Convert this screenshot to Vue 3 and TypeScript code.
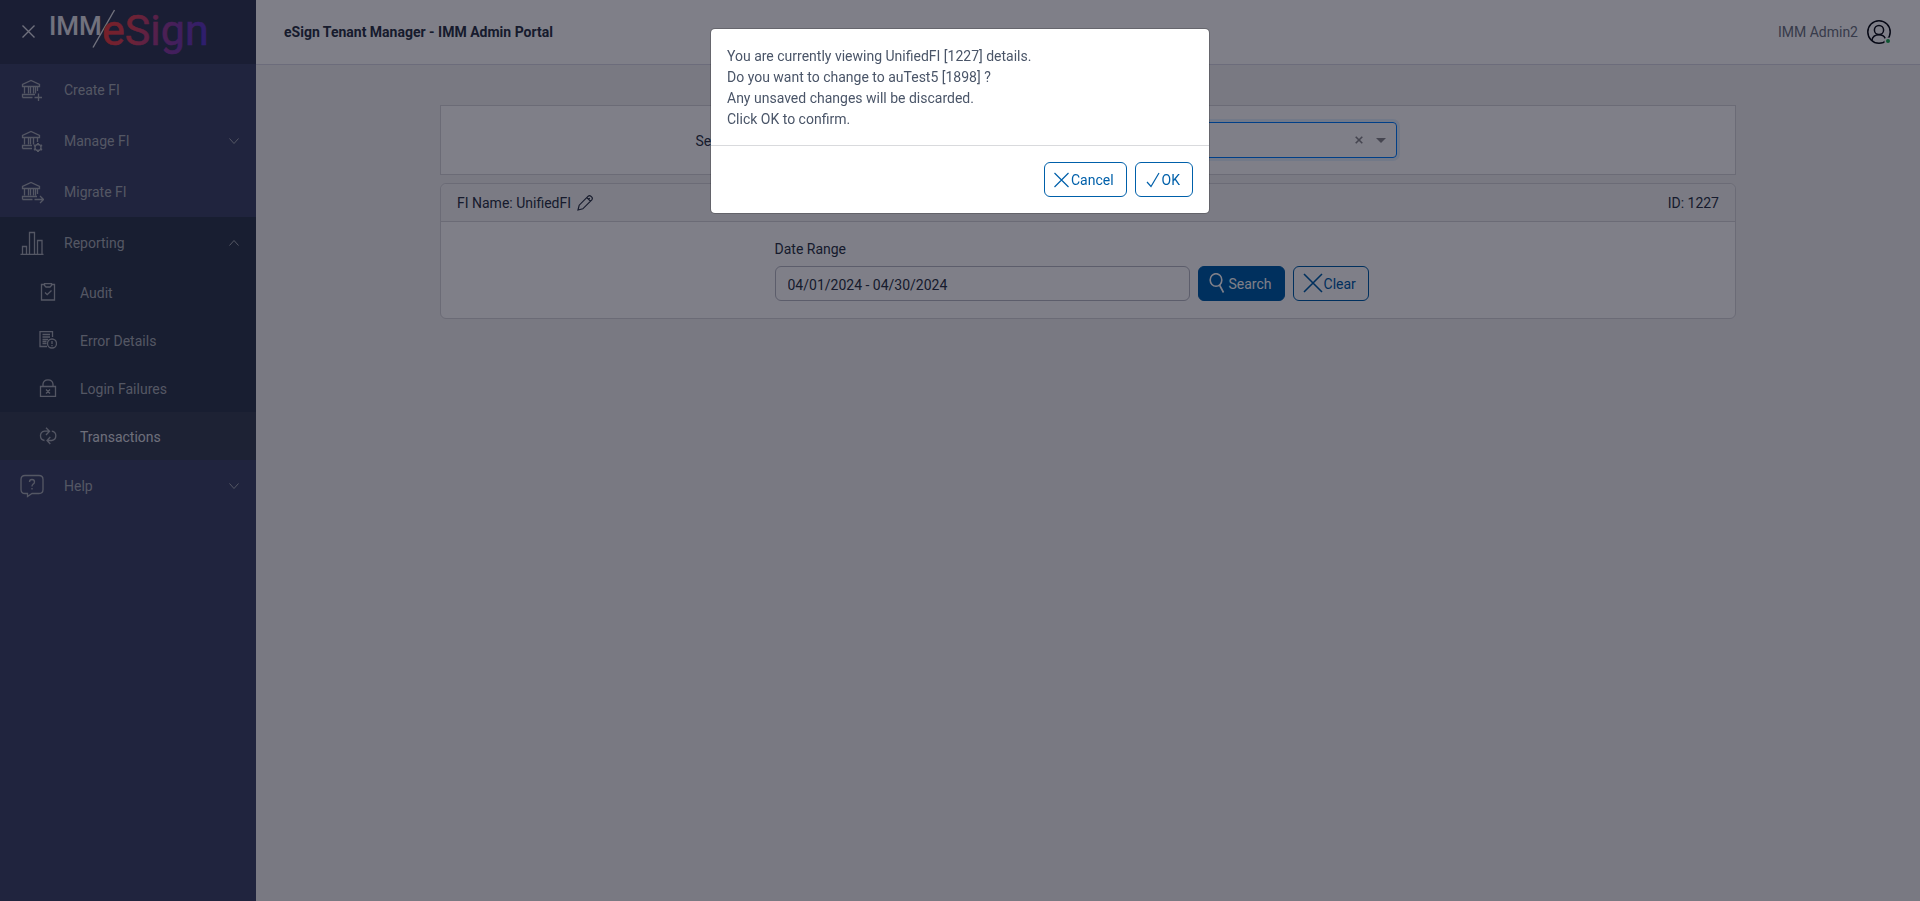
<script setup lang="ts">
import { ref } from 'vue'

interface NavItem {
  label: string
  icon: string
  chevron?: 'up' | 'down'
  children?: { label: string; icon: string; active?: boolean }[]
}

const nav: NavItem[] = [
  { label: 'Create FI', icon: 'bank-plus' },
  { label: 'Manage FI', icon: 'bank-gear', chevron: 'down' },
  { label: 'Migrate FI', icon: 'bank-arrow' },
  {
    label: 'Reporting',
    icon: 'bars',
    chevron: 'up',
    children: [
      { label: 'Audit', icon: 'audit' },
      { label: 'Error Details', icon: 'error' },
      { label: 'Login Failures', icon: 'lock' },
      { label: 'Transactions', icon: 'cycle', active: true },
    ],
  },
  { label: 'Help', icon: 'help', chevron: 'down' },
]

const institution = ref('auTest5')
const dateRange = ref('04/01/2024 - 04/30/2024')
const message = [
  'You are currently viewing UnifiedFI [1227] details.',
  'Do you want to change to auTest5 [1898] ?',
  'Any unsaved changes will be discarded.',
  'Click OK to confirm.',
]
</script>

<template>
  <div class="app">
    <aside class="sidebar">
      <div class="brand">
        <button class="plain close" type="button" aria-label="Close menu">
          <svg width="13" height="13" viewBox="0 0 13 13"><path d="M0.5 0.5L12.5 12.5M12.5 0.5L0.5 12.5" /></svg>
        </button>
        <svg class="logo" width="160" height="56" viewBox="0 0 160 56" role="img" aria-label="IMM eSign">
          <defs>
            <linearGradient id="brandGradient" gradientUnits="userSpaceOnUse" x1="54" y1="20" x2="156" y2="40">
              <stop offset="0" stop-color="#f2403f" />
              <stop offset="0.3" stop-color="#d9455c" />
              <stop offset="0.6" stop-color="#96409a" />
              <stop offset="1" stop-color="#5a3ccc" />
            </linearGradient>
          </defs>
          <text class="logo-imm" x="-1" y="32">IMM</text>
          <path class="logo-slash" d="M43 44.5L64.5 7" />
          <text class="logo-esign" x="52" y="42">eSign</text>
        </svg>
      </div>
      <nav>
        <ul>
          <li v-for="item in nav" :key="item.label" :class="{ open: item.children }">
            <a class="nav-link" href="#">
              <svg class="icon" width="24" height="24" viewBox="0 0 24 24">
                <g v-if="item.icon.startsWith('bank')">
                  <path d="M2.5 8.5V6.5L11 2.5L19.5 6.5V8.5ZM4.5 8.5V15.5M8.5 8.5V15.5M10.5 8.5V15.5M13.5 8.5V15.5" />
                  <path v-if="item.icon === 'bank-plus'" d="M15.5 8.5V15.5M17.5 8.5V13M2.5 19.5V16.5H15M2.5 19.5H12.5M14.5 19.5H22M18.5 15.5V23" />
                  <path v-if="item.icon === 'bank-arrow'" d="M15.5 8.5V15.5M17.5 8.5V14M2.5 19.5V16.5H17M2.5 19.5H12.5M14.5 19.5H23.5M20 16L23.5 19.5L20 23" />
                  <g v-if="item.icon === 'bank-gear'">
                    <path d="M17.5 8.5V13M2.5 19.5V16.5H12M2.5 19.5H12" />
                    <circle cx="18" cy="18.5" r="3" />
                    <path d="M18 14V15.5M18 21.5V23M14 16.2L15.4 17M20.6 20L22 20.8M14 20.8L15.4 20M20.6 17L22 16.2" class="thick" />
                  </g>
                </g>
                <path v-if="item.icon === 'bars'" d="M0.5 23.5H23.5M2.5 23.5V15.5H6.5V23.5M9.5 23.5V1.5H14.5V23.5M17.5 23.5V9.5H22V23.5" />
                <g v-if="item.icon === 'help'">
                  <path d="M5 1.5H19Q23 1.5 23 5.5V15.5Q23 19.5 19 19.5H12L7.5 22.5V19.5H5Q1 19.5 1 15.5V5.5Q1 1.5 5 1.5Z" />
                  <path d="M9.5 8Q9.5 5.5 12 5.5T14.5 8Q14.5 9.5 12.8 10.4Q12 11 12 12.5M12 14V15.5" />
                </g>
              </svg>
              <span>{{ item.label }}</span>
              <svg v-if="item.chevron" class="chevron" width="10" height="6" viewBox="0 0 10 6">
                <path :d="item.chevron === 'up' ? 'M0.5 5.5L5 0.5L9.5 5.5' : 'M0.5 0.5L5 5.5L9.5 0.5'" />
              </svg>
            </a>
            <ul v-if="item.children">
              <li v-for="child in item.children" :key="child.label">
                <a class="nav-link sub" :class="{ active: child.active }" href="#">
                  <svg class="icon" width="18" height="18" viewBox="0 0 18 18">
                    <path v-if="child.icon === 'audit'" d="M5.5 1.5H2.5V17H15.5V1.5H12.5M5.5 0.5H12.5V2.5L11 4H7L5.5 2.5ZM6 9.5L8.2 11.7L12.5 7.5" />
                    <g v-if="child.icon === 'error'">
                      <path d="M13.5 6V0.5H1V15.5H8M3.5 3.5H11M3.5 6H11M3.5 8.5H9M3.5 10.5H7.5M3.5 12.5H7.5" />
                      <circle cx="13" cy="12.5" r="4.5" />
                      <path d="M13 10V13M13 14V15.3" />
                    </g>
                    <path v-if="child.icon === 'lock'" d="M1.5 7.5H16.5V17.5H1.5ZM4 7.5V5Q4.5 0.8 9 0.8T14 5V7.5M7 10.5L11 14.5M11 10.5L7 14.5" />
                    <path v-if="child.icon === 'cycle'" d="M5.5 13.5A4.7 4.7 0 0 1 5.5 4.2H10.5M7 0.8L10.5 4.2L7 8M12.8 4.2A4.7 4.7 0 0 1 12.8 13.5H8M11.3 10L8 13.5L11.3 17" />
                  </svg>
                  <span>{{ child.label }}</span>
                </a>
              </li>
            </ul>
          </li>
        </ul>
      </nav>
    </aside>

    <div class="page">
      <header class="topbar">
        <h1>eSign Tenant Manager - IMM Admin Portal</h1>
        <button class="plain user" type="button">
          <span>IMM Admin2</span>
          <svg width="24" height="24" viewBox="0 0 24 24">
            <circle cx="12" cy="12" r="11.2" />
            <circle cx="12" cy="10" r="4.6" />
            <path d="M4.8 20.5Q6 14.8 12 14.8Q16.5 14.8 18.3 18.5" />
            <circle class="halo" cx="21" cy="21" r="3.6" />
            <circle class="status" cx="21" cy="21" r="2" />
          </svg>
        </button>
      </header>

      <main>
        <section class="picker">
          <label for="institution">Select FI</label>
          <div class="combo">
            <select id="institution" v-model="institution">
              <option>auTest5</option>
              <option>UnifiedFI</option>
            </select>
            <button class="plain clear-value" type="button" aria-label="Clear selection">
              <svg width="8" height="8" viewBox="0 0 8 8"><path d="M0.7 0.7L7.3 7.3M7.3 0.7L0.7 7.3" /></svg>
            </button>
            <svg class="caret" width="10" height="5" viewBox="0 0 10 5"><path d="M0 0H10L5 5Z" /></svg>
          </div>
        </section>

        <section class="card">
          <div class="card-head">
            <span>FI Name: UnifiedFI</span>
            <button class="plain edit" type="button" aria-label="Edit name">
              <svg width="16" height="16" viewBox="0 0 16 16">
                <path d="M1 15L2.2 10.2L11.2 1.2Q12.5 0.1 13.8 1.2L14.8 2.2Q15.9 3.5 14.8 4.8L5.8 13.8ZM9.8 2.6L13.4 6.2M11.6 4.4L12.8 3.2" />
              </svg>
            </button>
            <span class="fi-id">ID: 1227</span>
          </div>
          <form class="card-body" @submit.prevent>
            <label for="range">Date Range</label>
            <div class="filters">
              <input id="range" v-model="dateRange" type="text" />
              <button class="btn primary" type="submit">
                <svg width="22" height="24" viewBox="0 0 22 24"><ellipse cx="9" cy="7" rx="5.8" ry="6.3" /><path d="M12.5 12L16.5 19.5" /></svg>
                Search
              </button>
              <button class="btn" type="reset" @click.prevent>
                <svg width="22" height="24" viewBox="0 0 22 24"><path d="M2 1L20 19M20 1L2 19" /></svg>
                Clear
              </button>
            </div>
          </form>
        </section>
      </main>
    </div>

    <div class="backdrop">
      <div class="dialog" role="dialog" aria-modal="true" aria-label="Confirm change">
        <div class="dialog-body">
          <p v-for="line in message" :key="line">{{ line }}</p>
        </div>
        <div class="dialog-foot">
          <button class="btn" type="button">
            <svg class="thin" width="18" height="18" viewBox="0 0 18 18"><path d="M1.5 1L15.5 15M15.5 1L1.5 15" /></svg>
            Cancel
          </button>
          <button class="btn" type="button">
            <svg class="thin" width="18" height="18" viewBox="0 0 18 18"><path d="M3 10L7 14.5L15 1" /></svg>
            OK
          </button>
        </div>
      </div>
    </div>
  </div>
</template>

<style>
body {
  margin: 0;
  background: #f2f2f2;
}
</style>

<style scoped>
.app {
  display: flex;
  min-height: 100vh;
  font: 14px/21px Roboto, sans-serif;
  color: #2e3748;
  background: #f2f2f2;
}
.app * {
  box-sizing: border-box;
}
button,
input,
select {
  font: inherit;
  color: inherit;
}
.plain {
  padding: 0;
  border: 0;
  background: none;
}
svg {
  flex: none;
  fill: none;
  stroke: currentColor;
}
.sidebar {
  flex: none;
  width: 256px;
  background: #40486a;
  color: #a9aeb6;
}
.brand {
  display: flex;
  align-items: center;
  height: 64px;
  padding: 0 22px 2px;
  background: #343c56;
}
.close {
  display: flex;
  width: 28px;
  color: #dfe1e6;
}
.close svg {
  stroke-width: 1.4;
}
.logo {
  overflow: visible;
}
.logo text {
  font-family: Roboto, sans-serif;
  stroke: none;
}
.logo-imm {
  font-size: 26px;
  font-weight: 500;
  fill: #e4e5ea;
}
.logo-slash {
  stroke: #e4e5ea;
  stroke-width: 1.4;
}
.logo .logo-esign {
  font-size: 43px;
  font-weight: 400;
  fill: url(#brandGradient);
  stroke: url(#brandGradient);
  stroke-width: 0.6;
}
ul {
  margin: 0;
  padding: 0;
  list-style: none;
}
.open {
  background: #303c50;
}
.nav-link {
  display: flex;
  align-items: center;
  height: 51px;
  padding: 0 17px 0 20px;
  color: inherit;
  text-decoration: none;
}
.nav-link span,
.card-head span {
  padding-top: 2px;
}
.icon {
  margin-right: 20px;
  stroke-width: 1.3;
}
.chevron {
  margin-left: auto;
}
.thick {
  stroke-width: 2;
}
.sub {
  height: 48px;
  padding-left: 39px;
}
.sub .icon {
  margin-right: 23px;
}
.active {
  background: #3b4557;
  color: #dcdee2;
}
.active .icon {
  color: #a9aeb6;
}
.page {
  flex: 1;
  min-width: 0;
}
.topbar {
  display: flex;
  align-items: center;
  justify-content: space-between;
  height: 65px;
  padding: 0 29px 0 28px;
  border-bottom: 1px solid #d8d8e4;
  background: #fff;
}
h1 {
  margin: 0;
  font-size: 14px;
  font-weight: 700;
}
.user {
  display: flex;
  align-items: center;
  gap: 9px;
  color: #6f7683;
}
.user svg {
  color: #0c1018;
  stroke-width: 1.5;
  overflow: visible;
}
.halo {
  fill: #fff;
  stroke: none;
}
.status {
  fill: #1fae54;
  stroke: none;
}
main {
  padding: 40px 184px;
}
.picker {
  display: flex;
  align-items: center;
  gap: 20px;
  height: 70px;
  margin-bottom: 8px;
  padding-right: 338px;
  border: 1px solid #d6d6da;
  background: #fff;
}
.picker label {
  margin-left: auto;
  padding-top: 2px;
}
.combo {
  display: flex;
  align-items: center;
  width: 628px;
  height: 36px;
  padding-right: 10px;
  border: 1px solid #007eff;
  border-radius: 4px;
  box-shadow: 0 0 0 3px rgba(0, 126, 255, 0.1);
  color: #8a8a8e;
}
.combo select {
  flex: 1;
  height: 34px;
  padding: 0 10px;
  border: 0;
  outline: 0;
  background: none;
  appearance: none;
}
.clear-value {
  display: flex;
  margin-right: 13px;
}
.clear-value svg {
  stroke-width: 1.6;
}
.caret {
  fill: currentColor;
  stroke: none;
}
.card {
  border: 1px solid #d6d6da;
  border-radius: 6px;
  background: #fff;
}
.card-head {
  display: flex;
  align-items: center;
  height: 38px;
  padding: 0 16px;
  border-bottom: 1px solid #d6d6da;
  border-radius: 6px 6px 0 0;
  background: #f7f7f7;
}
.edit {
  display: flex;
  margin-left: 6px;
}
.edit svg {
  stroke-width: 1.2;
}
.fi-id {
  margin-left: auto;
}
.card-body {
  padding: 17px 16px 17px calc(25% + 10px);
}
.card-body label {
  display: block;
  margin-bottom: 6px;
}
.filters {
  display: flex;
  gap: 8px;
}
.filters input {
  width: 415px;
  height: 35px;
  padding: 2px 12px 0;
  border: 1px solid #b8bac4;
  border-radius: 6px;
  background: #fff;
}
.btn {
  display: flex;
  align-items: center;
  height: 35px;
  padding: 2px 12px 0 8px;
  border: 1px solid #0060aa;
  border-radius: 6px;
  background: #fff;
  color: #0060aa;
  white-space: nowrap;
}
.btn svg {
  stroke-width: 1.6;
}
.btn .thin {
  stroke-width: 1.2;
}
.primary {
  background: #0060aa;
  color: #fff;
}
.backdrop {
  position: fixed;
  inset: 0;
  background: rgba(0, 0, 18, 0.5);
}
.dialog {
  width: 500px;
  margin: 28px auto;
  border: 1px solid rgba(0, 0, 0, 0.2);
  border-radius: 5px;
  background: #fff;
  background-clip: padding-box;
  color: #4a5568;
}
.dialog-body {
  padding: 17px 16px 15px;
  border-bottom: 1px solid #d9dadd;
}
.dialog-body p {
  margin: 0;
}
.dialog-foot {
  display: flex;
  justify-content: flex-end;
  gap: 8px;
  padding: 16px;
}
</style>
